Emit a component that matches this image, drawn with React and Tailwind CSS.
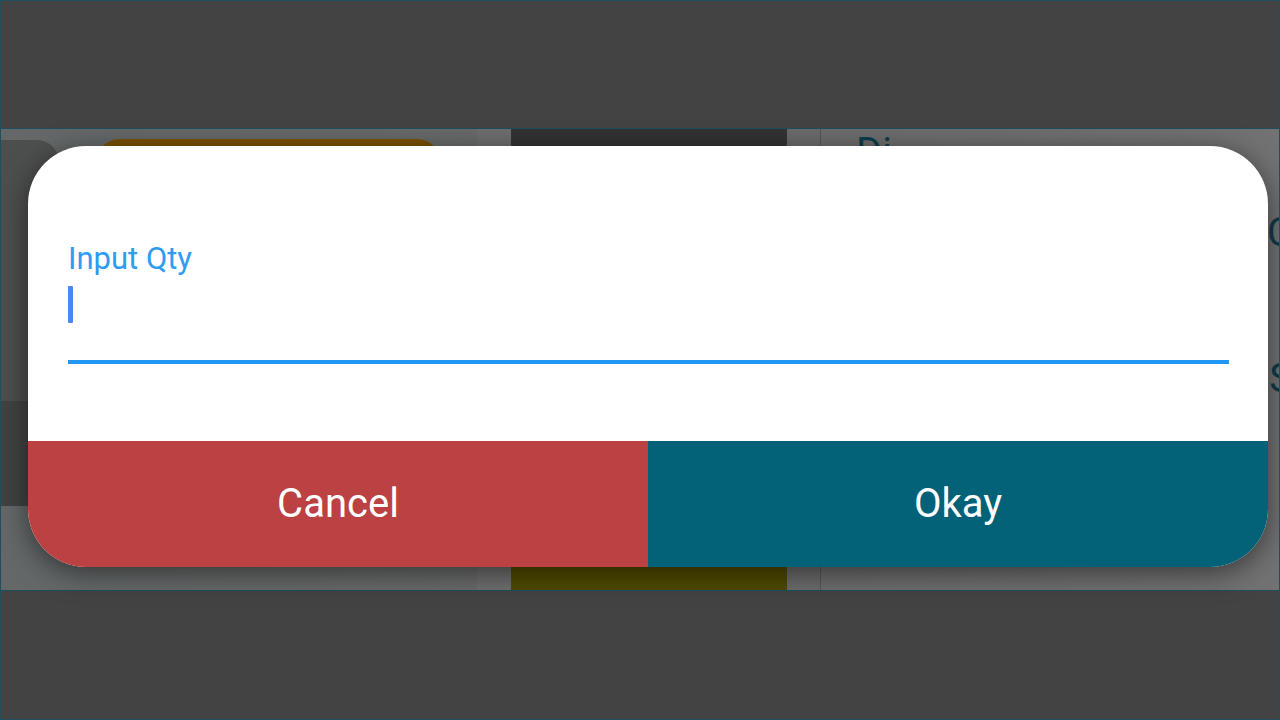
import React from "react";

export default function App() {
  return (
    <div
      className="w-[1280px] h-[720px] bg-[#434343] border border-[#1d4f5e] flex flex-col overflow-hidden"
      style={{ fontFamily: "Roboto, 'Noto Sans', sans-serif" }}
    >
      <div className="h-[127px] shrink-0" />

      {/* dimmed app band behind the dialog */}
      <div className="relative h-[463px] shrink-0 border-y border-[#1d4f5e] bg-gradient-to-r from-[#646868] via-[#6a6a6a] to-[#727272]">
        <div className="flex h-full">
          {/* left column */}
          <div className="w-[476px] flex items-start gap-[37px]">
            <div className="mt-[11px] w-[58px] h-[366px] rounded-r-[22px] bg-[#4d4e4e] flex flex-col justify-end overflow-hidden">
              <div className="h-[105px] bg-[#414242]" />
            </div>
            <div className="mt-[10px] w-[345px] h-[30px] rounded-t-[24px] bg-[#7a5200]" />
          </div>
          <div className="w-[34px] bg-[#6e6e6e]" />
          {/* middle column */}
          <div className="w-[276px] flex flex-col justify-between">
            <div className="h-[38px] rounded-b-[24px] bg-[#333333]" />
            <div className="h-[24px] bg-[#4f4a00]" />
          </div>
          <div className="w-[33px] bg-[#6b6b6b]" />
          <div className="w-px bg-[#555555]" />
          {/* right column */}
          <div className="flex-1 flex justify-between pl-[35px] text-[40px] leading-none text-[#0f3c4a]">
            <div className="pt-[4px]">Di</div>
            <div className="flex flex-col items-end pt-[84px] gap-[106px] mr-[-14px]">
              <span>C</span>
              <span>S</span>
            </div>
          </div>
        </div>

        {/* dialog */}
        <div className="absolute left-[27px] top-[17px] w-[1240px] h-[421px] rounded-[58px] overflow-hidden bg-white flex flex-col shadow-[0_6px_28px_rgba(0,0,0,0.5)]">
          <div className="h-[295px] px-[40px] pt-[97px] flex flex-col">
            <div className="text-[31px] leading-[31px] text-[#2d9cf2]">Input Qty</div>
            <div className="mt-[12px] h-[37px] flex items-center">
              <div className="w-[5px] h-[37px] bg-[#4a86f5] rounded-[1px]" />
            </div>
            <div className="mt-[37px] mr-[-1px] h-[4px] bg-[#2196f3]" />
          </div>
          <div className="flex-1 flex">
            <button className="flex-1 bg-[#bb4142] text-white text-[40px] flex items-center justify-center">
              Cancel
            </button>
            <button className="flex-1 bg-[#036178] text-white text-[40px] flex items-center justify-center">
              Okay
            </button>
          </div>
        </div>
      </div>

      <div className="flex-1" />
    </div>
  );
}
